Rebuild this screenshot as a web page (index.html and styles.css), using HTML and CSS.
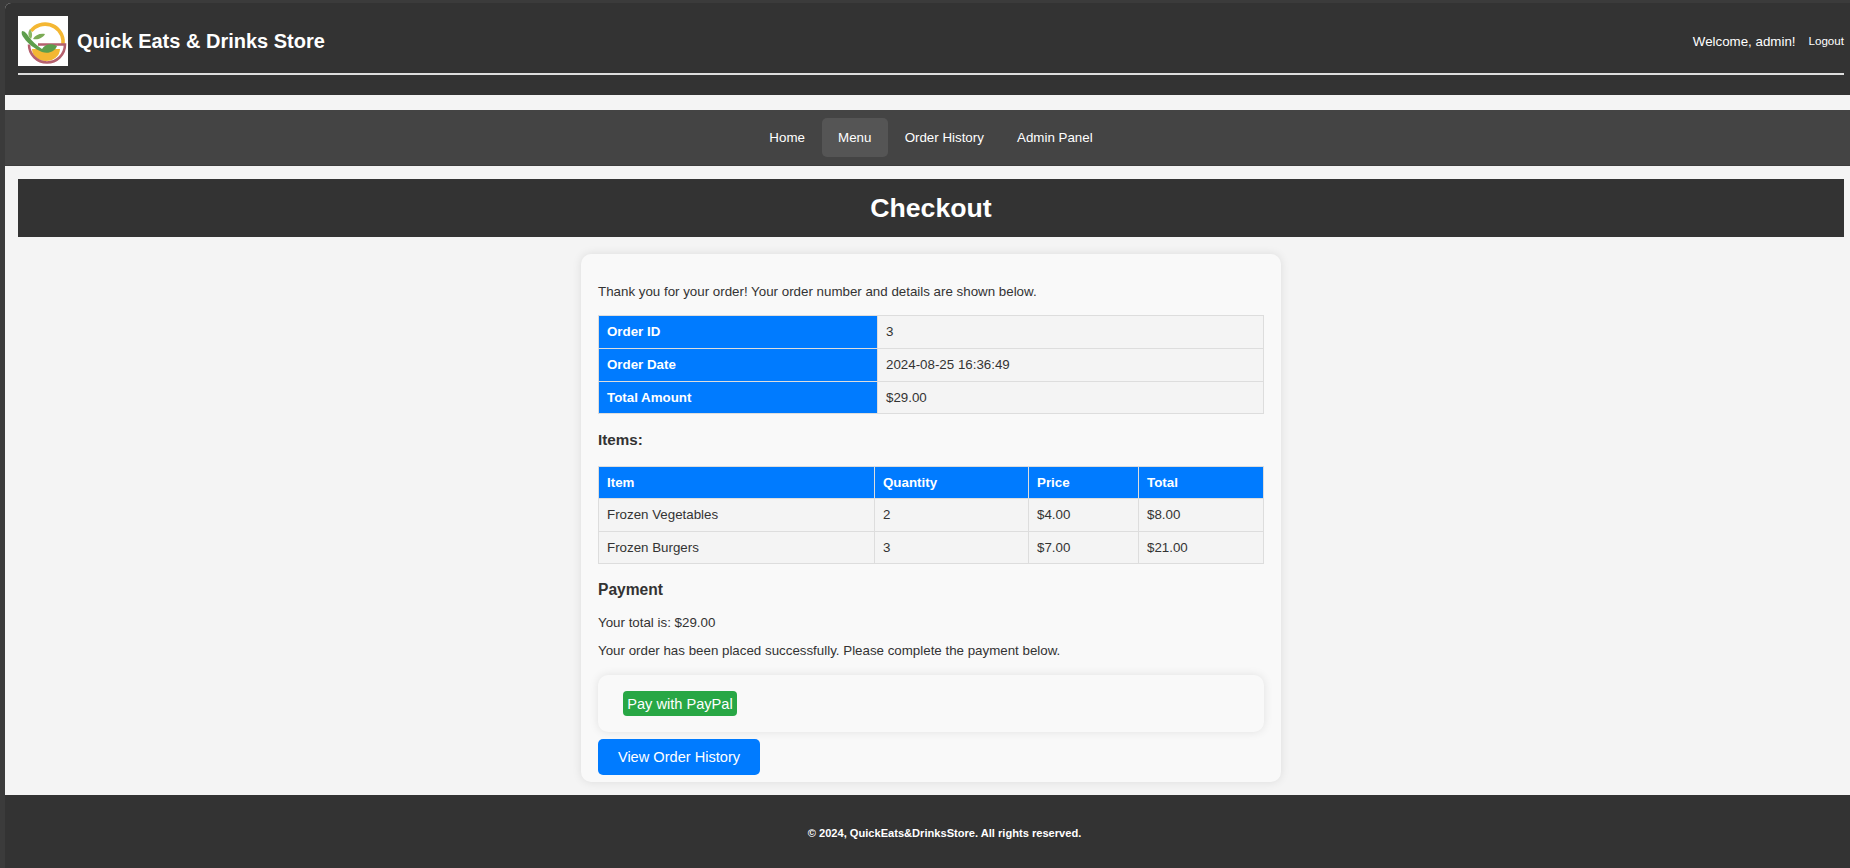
FILE: index.html
```html
<!DOCTYPE html>
<html lang="en">
<head>
<meta charset="utf-8">
<title>Checkout</title>
<link rel="stylesheet" href="styles.css">
</head>
<body>
<div class="shell">
<header class="site-header">
  <div class="header-row">
    <div class="brand">
      <div class="logo">
        <svg width="50" height="50" viewBox="0 0 50 50">
          <path d="M14 33 H42 A14 12 0 0 1 14 33Z" fill="#f4b733"/>
          <path d="M13 15 A18 18 0 0 1 45 24 L45 28" fill="none" stroke="#f4b733" stroke-width="3.6"/>
          <path d="M20 28.5 H47 A18 18 0 0 1 11 28.5" fill="none" stroke="#b5606e" stroke-width="2.6"/>
          <path d="M4 15 C7 15 9 18 11 21 C14 25 18 29 24 33 C27 28 33 27 39 30 C37 36 30 38 24 36 C17 33 10 28 6 22 C4 20 3 17 4 15Z" fill="#5d9e4c"/>
          <path d="M11 21 C10 18 10 16 12 13 C14 16 15 19 13 23Z" fill="#8ab863"/>
          <path d="M15 23 C17 19 22 17 27 18 C25 22 20 24 15 23Z" fill="#7bab55"/>
        </svg>
      </div>
      <h1 class="brand-name">Quick Eats &amp; Drinks Store</h1>
    </div>
    <div class="user-box">
      <span class="welcome">Welcome, admin!</span>
      <a class="logout" href="#">Logout</a>
    </div>
  </div>
</header>
<nav class="site-nav">
  <a href="#">Home</a>
  <a href="#" class="active">Menu</a>
  <a href="#">Order History</a>
  <a href="#">Admin Panel</a>
</nav>
<main class="page">
  <h2 class="page-title">Checkout</h2>
  <section class="card">
    <p class="intro">Thank you for your order! Your order number and details are shown below.</p>
    <table class="summary">
      <tr><th>Order ID</th><td>3</td></tr>
      <tr><th>Order Date</th><td>2024-08-25 16:36:49</td></tr>
      <tr><th>Total Amount</th><td>$29.00</td></tr>
    </table>
    <h3 class="section-title items-title">Items:</h3>
    <table class="items">
      <thead><tr><th class="c1">Item</th><th class="c2">Quantity</th><th class="c3">Price</th><th>Total</th></tr></thead>
      <tbody>
        <tr><td>Frozen Vegetables</td><td>2</td><td>$4.00</td><td>$8.00</td></tr>
        <tr><td>Frozen Burgers</td><td>3</td><td>$7.00</td><td>$21.00</td></tr>
      </tbody>
    </table>
    <h3 class="section-title pay-title">Payment</h3>
    <p class="total-line">Your total is: $29.00</p>
    <p class="placed-line">Your order has been placed successfully. Please complete the payment below.</p>
    <div class="pay-box"><button class="paypal" type="button">Pay with PayPal</button></div>
    <a class="history-btn" href="#">View Order History</a>
  </section>
</main>
<footer class="site-footer">© 2024, QuickEats&amp;DrinksStore. All rights reserved.</footer>
</div>
</body>
</html>
```

FILE: styles.css
```css
* { box-sizing: border-box; }
html, body { margin: 0; height: 100%; }
body {
  background: #3b3b3b;
  font-family: "Liberation Sans", Arial, sans-serif;
  color: #333;
  overflow: hidden;
}
p { margin: 0; line-height: 16px; }
.shell {
  margin: 3px 0 0 5px;
  height: 865px;
  background: #f4f4f4;
  border-top-left-radius: 6px;
  display: flex;
  flex-direction: column;
}
.site-header {
  height: 92px;
  background: #333;
  border-top-left-radius: 6px;
  padding: 13px 6px 0 13px;
  flex: none;
}
.header-row {
  height: 59px;
  border-bottom: 2px solid #ddd;
  display: flex;
  justify-content: space-between;
  align-items: flex-start;
}
.brand { display: flex; align-items: center; gap: 9px; }
.logo { width: 50px; height: 50px; background: #fff; display: flex; }
.brand-name { margin: 0; font-size: 20px; font-weight: 700; color: #fff; }
.user-box { display: flex; align-items: center; gap: 13px; height: 50px; color: #fff; font-size: 13.33px; }
.logout { color: #fff; text-decoration: none; font-size: 11.6px; margin-top: -2px; }
.site-nav {
  margin-top: 15px;
  height: 56px;
  flex: none;
  background: #444;
  border-bottom: 1px solid #3d3d3d;
  display: flex;
  justify-content: center;
  align-items: flex-start;
  padding: 8px 0 0 7px;
}
.site-nav a {
  color: #fff;
  text-decoration: none;
  font-size: 13.33px;
  padding: 0 16.6px;
  height: 39px;
  line-height: 39px;
  border-radius: 5px;
}
.site-nav a.active { background: #555; }
.page { flex: 1; padding: 13px 6px 0 13px; min-height: 0; }
.page-title {
  margin: 0;
  height: 58px;
  line-height: 58px;
  background: #333;
  color: #fff;
  text-align: center;
  font-size: 26.67px;
  font-weight: 700;
}
.card {
  width: 700px;
  height: 528px;
  margin: 17px auto 0;
  background: #f9f9f9;
  border-radius: 10px;
  box-shadow: 0 0 10px rgba(0,0,0,0.1);
  padding: 30px 17px 0;
  font-size: 13.33px;
}
table { width: 100%; border-collapse: collapse; }
th, td { border: 1px solid #ddd; padding: 0 8px 1px; text-align: left; font-size: 13.33px; height: 33px; }
th { background: #007bff; color: #fff; font-weight: 700; }
td { background: #f4f4f4; }
tr:last-child > th, tr:last-child > td { height: 32px; padding-bottom: 0; }
.items thead th { height: 32px; }
.summary { margin-top: 15px; }
.summary th { width: 279px; }
.section-title { margin: 0; font-weight: 700; color: #333; line-height: 18px; }
.items-title { margin-top: 17px; font-size: 15.2px; }
.items { margin-top: 17px; table-layout: fixed; }
.items .c1 { width: 276px; }
.items .c2 { width: 154px; }
.items .c3 { width: 110px; }
.pay-title { margin-top: 17px; font-size: 15.6px; }
.total-line { margin-top: 16px; }
.placed-line { margin-top: 12px; }
.pay-box {
  margin-top: 16px;
  height: 57px;
  background: #f9f9f9;
  border-radius: 10px;
  box-shadow: 0 0 10px rgba(0,0,0,0.1);
  padding: 16px 25px;
}
.paypal {
  display: block;
  height: 25px;
  width: 114px;
  padding: 0;
  border: none;
  border-radius: 4px;
  background: #28a745;
  color: #fff;
  font-family: inherit;
  font-size: 14.6px;
  white-space: nowrap;
}
.history-btn {
  display: block;
  width: 162px;
  height: 36px;
  line-height: 36px;
  margin-top: 7px;
  text-align: center;
  background: #007bff;
  color: #fff;
  text-decoration: none;
  border-radius: 5px;
  font-size: 14.6px;
}
.site-footer {
  height: 73px;
  flex: none;
  background: #333;
  color: #fff;
  text-align: center;
  font-size: 11.1px;
  font-weight: 700;
  line-height: 76px;
  padding-left: 34px;
}
```
